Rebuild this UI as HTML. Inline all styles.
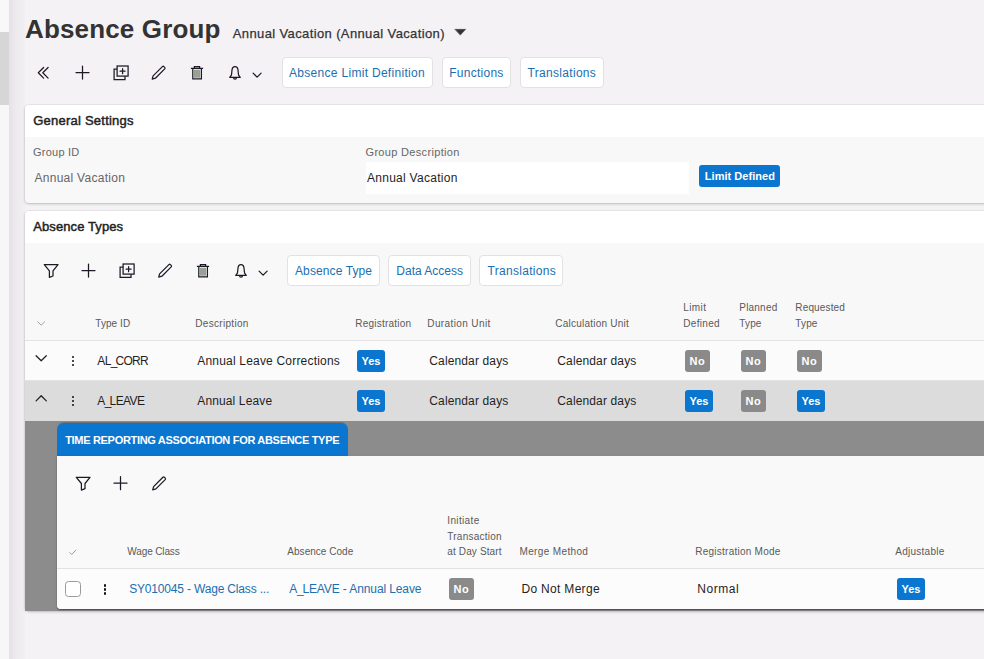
<!DOCTYPE html>
<html lang="en">
<head>
<meta charset="utf-8">
<title>Absence Group</title>
<style>
*{box-sizing:border-box;margin:0;padding:0}
html,body{width:984px;height:659px;overflow:hidden}
body{background:#f5f2f5;font-family:"Liberation Sans",sans-serif;color:#222;position:relative;font-size:12px}
.abs{position:absolute}
.t{position:absolute;white-space:nowrap;line-height:20px}
.sb{-webkit-text-stroke:.45px #222}
.md{-webkit-text-stroke:.25px #333}
.strip{position:absolute;left:0;width:9px}
.shadow{position:absolute;left:9px;top:0;width:16px;height:659px;background:linear-gradient(to right,rgba(0,0,0,.065),rgba(0,0,0,.03) 45%,rgba(0,0,0,.012))}
.ico{position:absolute;overflow:visible;pointer-events:none}
.ico *{fill:none;stroke:#1e1826;stroke-width:1.25;stroke-linecap:round;stroke-linejoin:round}
.btn{position:absolute;height:31.2px;background:#fff;border:1px solid #e2e1e3;border-radius:4px}
.card{position:absolute;left:25px;width:980px;background:#f8f8f8;border-radius:4px;box-shadow:0 0 0 1px rgba(0,0,0,.035),0 1px 3px rgba(0,0,0,.2)}
.card .hd{height:32px;background:#fff;border-radius:4px 4px 0 0}
.badge{position:absolute;height:22px;border-radius:3px;color:#fff;font-weight:bold;font-size:11px;line-height:22px;text-align:center}
.y{background:#0b76cf}
.n{background:#8a8a8a}
.dots{position:absolute;width:3px}
.dots i{display:block;width:2.9px;height:2.9px;border-radius:50%;background:#111;margin-bottom:1.1px}
</style>
</head>
<body>
<!-- left navigation strip -->
<div class="strip" style="top:0;height:32px;background:#f8f8f8"></div>
<div class="strip" style="top:32px;height:73px;background:#d6d6d6"></div>
<div class="strip" style="top:105px;height:554px;background:#f7f7f7"></div>
<div class="shadow"></div>

<!-- toolbar buttons -->
<div class="btn" style="left:281.5px;top:57.3px;width:151px"></div>
<div class="btn" style="left:441.5px;top:57.3px;width:69px"></div>
<div class="btn" style="left:519.5px;top:57.3px;width:84px"></div>

<!-- General Settings card -->
<div class="card" style="top:104.5px;height:98.5px"><div class="hd"></div></div>
<div class="abs" style="left:366px;top:162px;width:322.5px;height:31.5px;background:#fff"></div>
<div class="badge y" style="left:699px;top:165px;width:81px;height:21.5px"></div>

<!-- Absence Types card -->
<div class="card" style="top:210.5px;height:400px"><div class="hd"></div></div>
<div class="btn" style="left:286.7px;top:255.2px;width:93px"></div>
<div class="btn" style="left:387.8px;top:255.2px;width:83px"></div>
<div class="btn" style="left:478.8px;top:255.2px;width:84.3px"></div>

<div class="abs" style="left:25px;top:340px;width:959px;height:1px;background:#e3e3e3"></div>
<div class="abs" style="left:25px;top:341px;width:959px;height:39px;background:#fbfbfb"></div>
<div class="abs" style="left:25px;top:380px;width:959px;height:1px;background:#e3e3e3"></div>
<div class="abs" style="left:25px;top:380.5px;width:959px;height:40.5px;background:#dcdcdc"></div>

<!-- expanded detail -->
<div class="abs" style="left:25px;top:420.5px;width:959px;height:190px;background:#8c8c8c"></div>
<div class="abs" style="left:57px;top:422.5px;width:290.5px;height:33.5px;background:#0b76cf;border-radius:7px 7px 0 0;box-shadow:0 -1px 0 rgba(0,0,0,.18)"></div>
<div class="abs" style="left:57px;top:455.5px;width:940px;height:153.2px;background:#f9f9f9;border-radius:0 0 0 4px;box-shadow:0 1px 1.5px rgba(0,0,0,.5)"></div>
<div class="abs" style="left:57px;top:568px;width:927px;height:1px;background:#e3e3e3"></div>
<div class="abs" style="left:57px;top:569px;width:927px;height:39.5px;background:#fcfcfc;border-radius:0 0 0 4px"></div>
<div class="abs" style="left:65px;top:581px;width:16px;height:16px;border:1px solid #9a9a9a;border-radius:3.5px;background:#fff"></div>

<div class="badge y" style="left:357px;top:350px;width:28px;letter-spacing:-0.042px">Yes</div>
<div class="badge n" style="left:685px;top:350px;width:25px;letter-spacing:0.547px">No</div>
<div class="badge n" style="left:741px;top:350px;width:25px;letter-spacing:0.547px">No</div>
<div class="badge n" style="left:797px;top:350px;width:25px;letter-spacing:0.547px">No</div>
<div class="badge y" style="left:357px;top:390px;width:28px;letter-spacing:-0.042px">Yes</div>
<div class="badge y" style="left:685px;top:390px;width:28px;letter-spacing:-0.042px">Yes</div>
<div class="badge n" style="left:741px;top:390px;width:25px;letter-spacing:0.547px">No</div>
<div class="badge y" style="left:797px;top:390px;width:28px;letter-spacing:-0.042px">Yes</div>
<div class="badge n" style="left:449px;top:578px;width:25px;letter-spacing:0.547px">No</div>
<div class="badge y" style="left:897px;top:578px;width:28px;letter-spacing:-0.042px">Yes</div>
<div class="t" style="left:25px;top:18.99px;font-size:26px;color:#333;letter-spacing:0.149px;font-weight:bold">Absence Group</div>
<div class="t md" style="left:232.8px;top:23.50px;font-size:13px;color:#333;letter-spacing:0.375px">Annual Vacation (Annual Vacation)</div>
<div class="t" style="left:289px;top:63.14px;font-size:12px;color:#1b6fb0;letter-spacing:0.301px">Absence Limit Definition</div>
<div class="t" style="left:449.3px;top:63.14px;font-size:12px;color:#1b6fb0;letter-spacing:0.248px">Functions</div>
<div class="t" style="left:527.6px;top:63.14px;font-size:12px;color:#1b6fb0;letter-spacing:0.303px">Translations</div>
<div class="t sb" style="left:33.2px;top:110.50px;font-size:13px;color:#222;letter-spacing:0.235px">General Settings</div>
<div class="t" style="left:33px;top:142.19px;font-size:11px;color:#666;letter-spacing:0.232px">Group ID</div>
<div class="t" style="left:34.5px;top:167.54px;font-size:12px;color:#666;letter-spacing:0.273px">Annual Vacation</div>
<div class="t" style="left:365.5px;top:142.19px;font-size:11px;color:#666;letter-spacing:0.325px">Group Description</div>
<div class="t" style="left:367px;top:167.54px;font-size:12px;color:#1f1f1f;letter-spacing:0.273px">Annual Vacation</div>
<div class="t" style="left:704.8px;top:165.69px;font-size:11px;color:#fff;letter-spacing:0.041px;font-weight:bold">Limit Defined</div>
<div class="t sb" style="left:33.2px;top:216.50px;font-size:13px;color:#222;letter-spacing:0.103px">Absence Types</div>
<div class="t" style="left:295px;top:261.14px;font-size:12px;color:#1b6fb0;letter-spacing:0.102px">Absence Type</div>
<div class="t" style="left:396.3px;top:261.14px;font-size:12px;color:#1b6fb0;letter-spacing:0.0px">Data Access</div>
<div class="t" style="left:487.5px;top:261.14px;font-size:12px;color:#1b6fb0;letter-spacing:0.303px">Translations</div>
<div class="t" style="left:95.3px;top:313.74px;font-size:10px;color:#595959;letter-spacing:0.062px">Type ID</div>
<div class="t" style="left:195.3px;top:313.74px;font-size:10px;color:#595959;letter-spacing:0.307px">Description</div>
<div class="t" style="left:355.3px;top:313.74px;font-size:10px;color:#595959;letter-spacing:0.216px">Registration</div>
<div class="t" style="left:427.3px;top:313.74px;font-size:10px;color:#595959;letter-spacing:0.387px">Duration Unit</div>
<div class="t" style="left:555.3px;top:313.74px;font-size:10px;color:#595959;letter-spacing:0.23px">Calculation Unit</div>
<div class="t" style="left:683.3px;top:297.84px;font-size:10px;color:#595959;letter-spacing:0.394px">Limit</div>
<div class="t" style="left:683.3px;top:313.74px;font-size:10px;color:#595959;letter-spacing:0.31px">Defined</div>
<div class="t" style="left:739.3px;top:297.84px;font-size:10px;color:#595959;letter-spacing:0.201px">Planned</div>
<div class="t" style="left:739.3px;top:313.74px;font-size:10px;color:#595959;letter-spacing:0.145px">Type</div>
<div class="t" style="left:795.3px;top:297.84px;font-size:10px;color:#595959;letter-spacing:0.149px">Requested</div>
<div class="t" style="left:795.3px;top:313.74px;font-size:10px;color:#595959;letter-spacing:0.145px">Type</div>
<div class="t" style="left:97.3px;top:350.84px;font-size:12px;color:#1f1f1f;letter-spacing:-0.654px">AL<span style="margin-right:-1.3px">_</span>CORR</div>
<div class="t" style="left:197.3px;top:350.84px;font-size:12px;color:#1f1f1f;letter-spacing:0.191px">Annual Leave Corrections</div>
<div class="t" style="left:429.3px;top:350.84px;font-size:12px;color:#1f1f1f;letter-spacing:0.133px">Calendar days</div>
<div class="t" style="left:557.3px;top:350.84px;font-size:12px;color:#1f1f1f;letter-spacing:0.133px">Calendar days</div>
<div class="t" style="left:97.3px;top:390.84px;font-size:12px;color:#1f1f1f;letter-spacing:-0.571px">A<span style="margin-right:-1.3px">_</span>LEAVE</div>
<div class="t" style="left:197.3px;top:390.84px;font-size:12px;color:#1f1f1f;letter-spacing:0.124px">Annual Leave</div>
<div class="t" style="left:429.3px;top:390.84px;font-size:12px;color:#1f1f1f;letter-spacing:0.133px">Calendar days</div>
<div class="t" style="left:557.3px;top:390.84px;font-size:12px;color:#1f1f1f;letter-spacing:0.133px">Calendar days</div>
<div class="t" style="left:65.2px;top:429.89px;font-size:11px;color:#fff;letter-spacing:-0.313px;font-weight:bold">TIME REPORTING ASSOCIATION FOR ABSENCE TYPE</div>
<div class="t" style="left:127.3px;top:541.53px;font-size:10px;color:#595959;letter-spacing:-0.12px">Wage Class</div>
<div class="t" style="left:287.3px;top:541.53px;font-size:10px;color:#595959;letter-spacing:0.034px">Absence Code</div>
<div class="t" style="left:519.5px;top:541.53px;font-size:10px;color:#595959;letter-spacing:0.358px">Merge Method</div>
<div class="t" style="left:695.3px;top:541.53px;font-size:10px;color:#595959;letter-spacing:0.244px">Registration Mode</div>
<div class="t" style="left:895.3px;top:541.53px;font-size:10px;color:#595959;letter-spacing:0.255px">Adjustable</div>
<div class="t" style="left:447.3px;top:510.54px;font-size:10px;color:#595959;letter-spacing:0.352px">Initiate</div>
<div class="t" style="left:447.3px;top:526.53px;font-size:10px;color:#595959;letter-spacing:0.251px">Transaction</div>
<div class="t" style="left:447.3px;top:541.53px;font-size:10px;color:#595959;letter-spacing:0.133px">at Day Start</div>
<div class="t" style="left:129.2px;top:578.84px;font-size:12px;color:#1b6fb0;letter-spacing:-0.174px">SY010045 - Wage Class ...</div>
<div class="t" style="left:289.2px;top:578.84px;font-size:12px;color:#1b6fb0;letter-spacing:-0.109px">A<span style="margin-right:-1.3px">_</span>LEAVE - Annual Leave</div>
<div class="t" style="left:521.5px;top:578.84px;font-size:12px;color:#1f1f1f;letter-spacing:0.307px">Do Not Merge</div>
<div class="t" style="left:697.3px;top:578.84px;font-size:12px;color:#1f1f1f;letter-spacing:0.549px">Normal</div>

<div class="dots" style="left:71.5px;top:355.6px"><i></i><i></i><i></i></div>
<div class="dots" style="left:71.5px;top:395.6px"><i></i><i></i><i></i></div>
<div class="dots" style="left:103.6px;top:584.3px"><i></i><i></i><i></i></div>
<svg class="ico" style="left:0;top:0" width="984" height="659" viewBox="0 0 984 659"><g transform="translate(43.2 72.8)"><path d="M0.4 -5.3L-4.9 0L0.4 5.3M4.9 -5.3L-0.4 0L4.9 5.3"/></g><g transform="translate(82.5 72.5)"><path d="M-6.5 0H6.5M0 -6.5V6.5"/></g><g transform="translate(121 72.89999999999999)"><rect x="-3.9" y="-6.9" width="11" height="10.1" style="stroke-linejoin:miter"/><path d="M-3.9 -3.7H-6.9V6.6H4V3.2" style="stroke-linejoin:miter;stroke-linecap:butt"/><path d="M-0.9 -1.7H4.1M1.6 -4.2V0.8"/></g><g transform="translate(158.5 72.8)"><path d="M-6.3 6.3L-5.4 3.1L3.9 -6.2a1.1 1.1 0 0 1 1.5 0l0.8 0.8a1.1 1.1 0 0 1 0 1.5L-3.1 5.4Z"/></g><g transform="translate(197 72.8)"><rect x="-2.9" y="-3" width="5.8" height="7.9" style="fill:#8a9885;stroke:none"/><path d="M-1 -3V4.9M1 -3V4.9" style="stroke:#bcc5b8;stroke-width:.5"/><path d="M-6.1 -4.5H6.1M-2.6 -4.5V-6.1H2.6V-4.5M-4.2 -4.5V6.1H4.4V-4.5" style="stroke-linejoin:miter;stroke-linecap:butt"/></g><g transform="translate(235 73.0)"><path d="M-5.3 4.3L-3.6 2.1C-3.3 0.5 -3.2 -1 -3 -3C-2.8 -5.4 -1.6 -6.5 0 -6.5C1.6 -6.5 2.8 -5.4 3 -3C3.2 -1 3.3 0.5 3.6 2.1L5.3 4.3Z"/><path d="M-1.5 4.6a1.5 1.6 0 0 0 3 0"/></g><g transform="translate(257.1 75.1)"><path d="M-4 -2L0 2L4 -2"/></g><g transform="translate(51 270.8)"><path d="M-6.7 -6.2H7L2 0V5.2L-1.6 6.6V0Z"/></g><g transform="translate(88.5 270.5)"><path d="M-6.5 0H6.5M0 -6.5V6.5"/></g><g transform="translate(127 270.90000000000003)"><rect x="-3.9" y="-6.9" width="11" height="10.1" style="stroke-linejoin:miter"/><path d="M-3.9 -3.7H-6.9V6.6H4V3.2" style="stroke-linejoin:miter;stroke-linecap:butt"/><path d="M-0.9 -1.7H4.1M1.6 -4.2V0.8"/></g><g transform="translate(165 270.8)"><path d="M-6.3 6.3L-5.4 3.1L3.9 -6.2a1.1 1.1 0 0 1 1.5 0l0.8 0.8a1.1 1.1 0 0 1 0 1.5L-3.1 5.4Z"/></g><g transform="translate(203 270.8)"><rect x="-2.9" y="-3" width="5.8" height="7.9" style="fill:#8a9885;stroke:none"/><path d="M-1 -3V4.9M1 -3V4.9" style="stroke:#bcc5b8;stroke-width:.5"/><path d="M-6.1 -4.5H6.1M-2.6 -4.5V-6.1H2.6V-4.5M-4.2 -4.5V6.1H4.4V-4.5" style="stroke-linejoin:miter;stroke-linecap:butt"/></g><g transform="translate(241 271.0)"><path d="M-5.3 4.3L-3.6 2.1C-3.3 0.5 -3.2 -1 -3 -3C-2.8 -5.4 -1.6 -6.5 0 -6.5C1.6 -6.5 2.8 -5.4 3 -3C3.2 -1 3.3 0.5 3.6 2.1L5.3 4.3Z"/><path d="M-1.5 4.6a1.5 1.6 0 0 0 3 0"/></g><g transform="translate(263.1 273.1)"><path d="M-4 -2L0 2L4 -2"/></g><g transform="translate(83 483.5)"><path d="M-6.7 -6.2H7L2 0V5.2L-1.6 6.6V0Z"/></g><g transform="translate(120.5 483.2)"><path d="M-6.5 0H6.5M0 -6.5V6.5"/></g><g transform="translate(159 483.5)"><path d="M-6.3 6.3L-5.4 3.1L3.9 -6.2a1.1 1.1 0 0 1 1.5 0l0.8 0.8a1.1 1.1 0 0 1 0 1.5L-3.1 5.4Z"/></g><path d="M37.7 321.7L41.2 325.2L44.7 321.7" style="stroke:#a3a3a3;stroke-width:1"/><path d="M36.1 355.7L41.2 360.8L46.3 355.7" style="stroke:#222;stroke-width:1.3"/><path d="M36.1 400.9L41.2 395.8L46.3 400.9" style="stroke:#222;stroke-width:1.3"/><path d="M69.8 552.6L71.7 554.5L75.9 550.1" style="stroke:#9a9a9a;stroke-width:1"/><path d="M455 29.3H465.8L460.4 35Z" style="fill:#333;stroke:#333;stroke-width:.4"/></svg>

</body>
</html>
